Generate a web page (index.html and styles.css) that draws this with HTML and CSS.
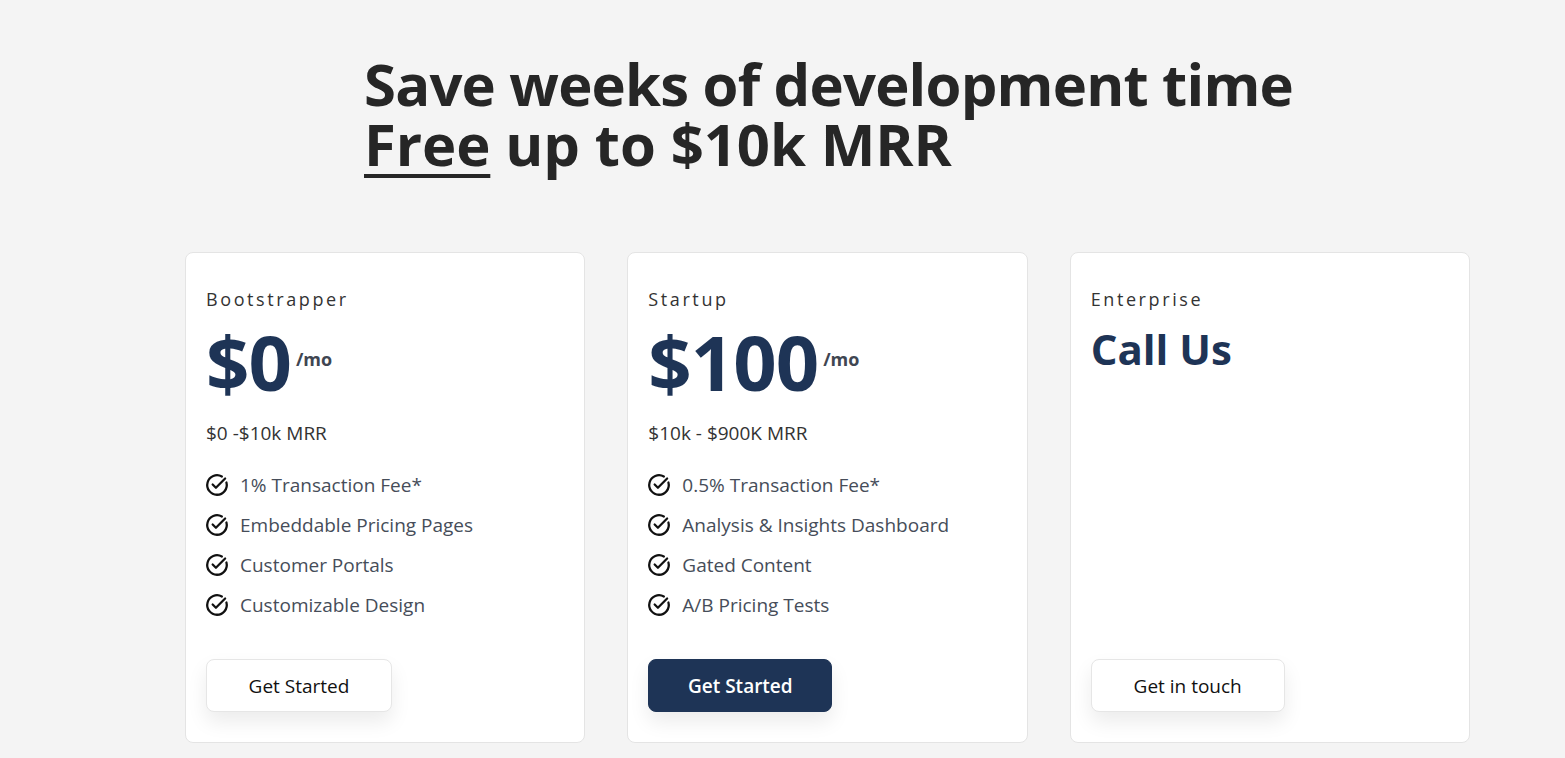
FILE: index.html
```html
<!DOCTYPE html>
<html lang="en">
<head>
<meta charset="utf-8">
<title>Pricing</title>
<link rel="stylesheet" href="styles.css">
</head>
<body>
<main class="page">
  <header class="hero">
    <h1 class="hero-title"><span class="line">Save weeks of development time</span><span class="line"><span class="free">Free</span> up to $10k MRR</span></h1>
  </header>
  <section class="plans">
    <article class="card">
      <div class="plan-name">Bootstrapper</div>
      <div class="price"><span class="amount">$0</span><span class="per">/mo</span></div>
      <div class="range">$0 -$10k MRR</div>
      <ul class="features">
        <li><svg class="check" viewBox="0 0 24 24"><path d="M20.7 9.7A9 9 0 1 1 16.5 4.2"/><path d="M8 11.5l3 3 8.5-8.5"/></svg>1% Transaction Fee*</li>
        <li><svg class="check" viewBox="0 0 24 24"><path d="M20.7 9.7A9 9 0 1 1 16.5 4.2"/><path d="M8 11.5l3 3 8.5-8.5"/></svg>Embeddable Pricing Pages</li>
        <li><svg class="check" viewBox="0 0 24 24"><path d="M20.7 9.7A9 9 0 1 1 16.5 4.2"/><path d="M8 11.5l3 3 8.5-8.5"/></svg>Customer Portals</li>
        <li><svg class="check" viewBox="0 0 24 24"><path d="M20.7 9.7A9 9 0 1 1 16.5 4.2"/><path d="M8 11.5l3 3 8.5-8.5"/></svg>Customizable Design</li>
      </ul>
      <button class="btn">Get Started</button>
    </article>
    <article class="card">
      <div class="plan-name">Startup</div>
      <div class="price"><span class="amount">$100</span><span class="per">/mo</span></div>
      <div class="range">$10k - $900K MRR</div>
      <ul class="features">
        <li><svg class="check" viewBox="0 0 24 24"><path d="M20.7 9.7A9 9 0 1 1 16.5 4.2"/><path d="M8 11.5l3 3 8.5-8.5"/></svg>0.5% Transaction Fee*</li>
        <li><svg class="check" viewBox="0 0 24 24"><path d="M20.7 9.7A9 9 0 1 1 16.5 4.2"/><path d="M8 11.5l3 3 8.5-8.5"/></svg>Analysis &amp; Insights Dashboard</li>
        <li><svg class="check" viewBox="0 0 24 24"><path d="M20.7 9.7A9 9 0 1 1 16.5 4.2"/><path d="M8 11.5l3 3 8.5-8.5"/></svg>Gated Content</li>
        <li><svg class="check" viewBox="0 0 24 24"><path d="M20.7 9.7A9 9 0 1 1 16.5 4.2"/><path d="M8 11.5l3 3 8.5-8.5"/></svg>A/B Pricing Tests</li>
      </ul>
      <button class="btn btn-primary">Get Started</button>
    </article>
    <article class="card">
      <div class="plan-name">Enterprise</div>
      <div class="call">Call Us</div>
      <button class="btn btn-touch">Get in touch</button>
    </article>
  </section>
</main>
</body>
</html>
```
FILE: styles.css
```css
* { box-sizing: border-box; }
html, body { margin: 0; padding: 0; }
body {
  background: #f4f4f4;
  font-family: "Open Sans", "Noto Sans", "Liberation Sans", sans-serif;
  color: #262626;
}
.page {
  padding: 54px 95px 0 185px;
}
.hero {
  padding-left: 179px;
}
.hero-title {
  margin: 0;
  font-size: 58px;
  font-weight: 700;
  color: #262626;
  letter-spacing: -0.8px;
  display: flex;
  flex-direction: column;
}
.line {
  display: block;
  height: 60px;
  line-height: 60px;
}
.line + .line {
  letter-spacing: -0.1px;
}
.free {
  text-decoration: underline;
  text-decoration-thickness: 4px;
  text-underline-offset: 8px;
}
.plans {
  margin-top: 78px;
  display: grid;
  grid-template-columns: repeat(3, 1fr);
  gap: 42px;
}
.card {
  background: #fff;
  border: 1px solid #e4e4e4;
  border-radius: 8px;
  height: 491px;
  padding: 34px 20px 30px 20px;
  display: flex;
  flex-direction: column;
}
.plan-name {
  font-size: 18px;
  line-height: 24px;
  letter-spacing: 2.6px;
  color: #333;
}
.price {
  display: flex;
  align-items: flex-start;
  margin-top: 6px;
  color: #1e3456;
}
.amount {
  font-size: 76px;
  line-height: 90px;
  font-weight: 700;
  letter-spacing: -1px;
}
.per {
  font-size: 18px;
  font-weight: 700;
  color: #3f4652;
  margin-top: 30px;
  margin-left: 5px;
}
.range {
  margin-top: 14px;
  font-size: 19px;
  line-height: 24px;
  color: #333;
}
.features {
  list-style: none;
  margin: 27px 0 0 0;
  padding: 0;
  display: flex;
  flex-direction: column;
  gap: 14px;
}
.features li {
  display: flex;
  align-items: center;
  gap: 10px;
  font-size: 19px;
  font-weight: 500;
  line-height: 24px;
  color: #464d59;
}
.check {
  width: 26px;
  height: 26px;
  margin-left: -2px;
  flex: none;
  fill: none;
  stroke: #111;
  stroke-width: 2.1;
  stroke-linecap: round;
  stroke-linejoin: round;
}
.call {
  margin-top: 8px;
  font-size: 42px;
  line-height: 60px;
  font-weight: 700;
  color: #1e3456;
}
.btn {
  margin-top: auto;
  align-self: flex-start;
  width: 186px;
  height: 53px;
  border: 1px solid #e6e6e6;
  border-radius: 8px;
  background: #fff;
  font-family: inherit;
  font-size: 19px;
  font-weight: 500;
  color: #111;
  box-shadow: 0 10px 20px rgba(0, 0, 0, 0.08);
  cursor: pointer;
}
.btn-primary {
  width: 184px;
  background: #1e3456;
  border-color: #1e3456;
  color: #fff;
  font-weight: 600;
}
.btn-touch {
  width: 194px;
}
```
